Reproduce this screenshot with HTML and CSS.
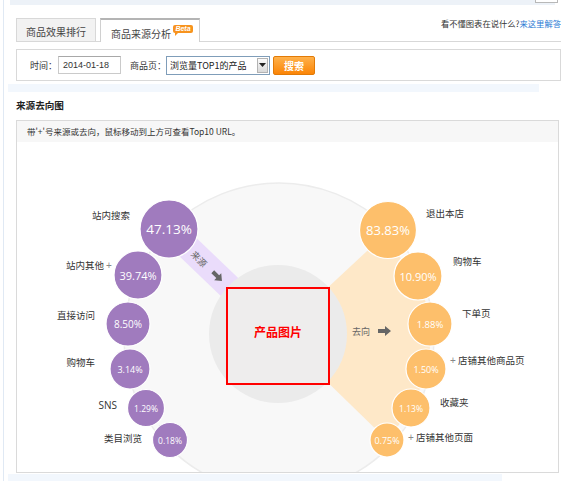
FILE: index.html
```html
<!DOCTYPE html>
<html lang="zh-CN">
<head>
<meta charset="utf-8">
<title>商品来源分析</title>
<link rel="stylesheet" href="styles.css">
</head>
<body>
<div class="frame">
  <div class="topstrip"><span class="topbox"></span></div>
  <div class="tabbar">
    <div class="tab">商品效果排行</div>
    <div class="tab active">商品来源分析<span class="beta">Beta</span></div>
    <div class="help">看不懂图表在说什么?<span class="helplink">来这里解答</span></div>
  </div>
  <div class="filter">
    <span class="lbl">时间：</span>
    <span class="input">2014-01-18</span>
    <span class="lbl lbl2">商品页：</span>
    <span class="select"><span class="seltext">浏览量TOP1的产品</span><span class="selbtn"><svg width="7" height="4" viewBox="0 0 7 4"><path d="M0 0H7L3.5 4Z" fill="#222"/></svg></span></span>
    <span class="btn">搜索</span>
  </div>
  <div class="band"></div>
  <div class="title">来源去向图</div>
  <div class="chart">
    <div class="chart-head">带'+'号来源或去向，鼠标移动到上方可查看Top10 URL。</div>
    <svg class="diagram" viewBox="17 142 541 330" width="541" height="330">
      <circle cx="279" cy="338" r="155" fill="#f8f8f8" stroke="#ececec" stroke-width="1.5"/>
      <line x1="169" y1="229" x2="265" y2="321" stroke="#eadcfb" stroke-width="25"/>
      <polygon points="278,334 381,238 418,276 432,324 428,369 412,408 387,440" fill="#fee8c8"/>
      <circle cx="278" cy="334" r="69" fill="#ebebeb"/>
      <rect x="227" y="288" width="102" height="96" fill="#eeeded" stroke="#ff0000" stroke-width="2"/>
      <text class="prod" x="278" y="331">产品图片</text>

      <text class="dir" x="199" y="259" transform="rotate(45 199 259)">来源</text>
      <path d="M-6 -2H1V-5L7 0L1 5V2H-6Z" fill="#666" transform="translate(217 276) rotate(45)"/>
      <text class="dir" x="361" y="331">去向</text>
      <path d="M-6 -2H1V-5L7 0L1 5V2H-6Z" fill="#666" transform="translate(384 331)"/>

      <g class="pnode">
        <circle cx="169" cy="229" r="29"/>
        <circle cx="138" cy="275" r="24"/>
        <circle cx="128" cy="324" r="22"/>
        <circle cx="130" cy="369" r="20"/>
        <circle cx="146" cy="408" r="18.5"/>
        <circle cx="170" cy="440" r="17.5"/>
      </g>
      <text class="pct" x="169" y="229" font-size="13.5">47.13%</text>
      <text class="pct" x="138" y="275" font-size="11">39.74%</text>
      <text class="pct" x="128" y="324" font-size="10">8.50%</text>
      <text class="pct" x="130" y="369" font-size="9">3.14%</text>
      <text class="pct" x="146" y="408" font-size="8.5">1.29%</text>
      <text class="pct" x="170" y="440" font-size="8.5">0.18%</text>

      <g class="onode">
        <circle cx="388" cy="230" r="28.5"/>
        <circle cx="418" cy="276" r="24"/>
        <circle cx="430" cy="324" r="22"/>
        <circle cx="426" cy="369" r="20"/>
        <circle cx="411" cy="408" r="19"/>
        <circle cx="387" cy="440" r="17"/>
      </g>
      <text class="pct" x="388" y="230" font-size="13">83.83%</text>
      <text class="pct" x="418" y="276" font-size="11">10.90%</text>
      <text class="pct" x="430" y="324" font-size="9.5">1.88%</text>
      <text class="pct" x="426" y="369" font-size="9">1.50%</text>
      <text class="pct" x="411" y="408" font-size="8.5">1.13%</text>
      <text class="pct" x="387" y="440" font-size="9">0.75%</text>

      <text class="lab end" x="130" y="215">站内搜索</text>
      <text class="lab end" x="104" y="265">站内其他</text>
      <text class="plus" x="109" y="265">+</text>
      <text class="lab end" x="95" y="315">直接访问</text>
      <text class="lab end" x="95" y="362">购物车</text>
      <text class="lab end sns" x="117" y="405">SNS</text>
      <text class="lab end" x="142" y="438">类目浏览</text>

      <text class="lab" x="426" y="213">退出本店</text>
      <text class="lab" x="453" y="261">购物车</text>
      <text class="lab" x="462" y="313">下单页</text>
      <text class="plus" x="453" y="360">+</text>
      <text class="lab" x="458" y="360">店铺其他商品页</text>
      <text class="lab" x="440" y="402">收藏夹</text>
      <text class="plus" x="411" y="437">+</text>
      <text class="lab" x="416" y="437">店铺其他页面</text>
    </svg>
  </div>
  <div class="band band-bottom"></div>
</div>
</body>
</html>
```

FILE: styles.css
```css
html, body {
  margin: 0;
  padding: 0;
  background: #ffffff;
}
body {
  font-family: "Noto Sans CJK SC", "Noto Sans", sans-serif;
  color: #333;
  width: 561px;
  height: 481px;
  overflow: hidden;
}
.frame {
  margin-left: 3px;
  border-left: 1px solid #e0e9f4;
  padding-left: 12px;
  width: 545px;
  height: 481px;
  overflow: hidden;
}
.topstrip {
  display: flex;
  margin-left: -6px;
  width: 545px;
  height: 5px;
  background: #edf2f8;
}
.topbox {
  margin-left: auto;
  margin-right: -3px;
  width: 21px;
  height: 2px;
  background: #fff;
  border: 1px solid #b8b8b8;
  border-top: none;
}
.tabbar {
  display: flex;
  align-items: flex-end;
  margin-top: 13px;
  height: 23px;
  border-bottom: 1px solid #d8d8d8;
}
.tab {
  box-sizing: border-box;
  display: flex;
  align-items: center;
  justify-content: center;
  width: 80px;
  height: 23px;
  padding-top: 3px;
  background: #f2f2f2;
  border: 1px solid #d8d8d8;
  border-bottom: none;
  font-size: 10px;
  color: #444;
}
.tab.active {
  justify-content: flex-start;
  width: 100px;
  height: 24px;
  margin-left: 4px;
  margin-bottom: -1px;
  padding-left: 10px;
  padding-top: 4px;
  background: #fff;
  border-color: #d0d0d0;
  border-top: 2px solid #b4b4b4;
}
.beta {
  position: relative;
  align-self: flex-start;
  margin-top: 1px;
  margin-left: 2px;
  width: 20px;
  height: 8px;
  line-height: 8px;
  border-radius: 2px;
  background: #f7931e;
  color: #fff;
  font-family: "Liberation Sans", sans-serif;
  font-weight: bold;
  font-style: italic;
  font-size: 7px;
  text-align: center;
}
.beta::after {
  content: "";
  position: absolute;
  left: 2px;
  bottom: -3px;
  border-left: 3px solid #f7931e;
  border-bottom: 3px solid transparent;
}
.help {
  align-self: flex-start;
  margin-left: auto;
  margin-right: 0;
  white-space: nowrap;
  font-size: 8.3px;
  line-height: 11px;
  color: #333;
}
.helplink {
  color: #2b7bd4;
}
.filter {
  box-sizing: border-box;
  display: flex;
  align-items: center;
  margin-top: 7px;
  height: 32px;
  padding-left: 13px;
  border: 1px solid #d9d9d9;
  font-size: 9px;
}
.lbl {
  color: #333;
  white-space: nowrap;
}
.input {
  box-sizing: border-box;
  display: flex;
  align-items: center;
  margin-left: 1px;
  width: 63px;
  height: 18px;
  padding-left: 4px;
  border: 1px solid #cacaca;
  border-top-color: #a8a8a8;
  font-family: "Liberation Sans", sans-serif;
  font-size: 9px;
  color: #333;
}
.lbl2 {
  margin-left: 9px;
}
.select {
  box-sizing: border-box;
  display: flex;
  align-items: center;
  width: 104px;
  height: 19px;
  border: 1px solid #7f9db9;
  background: #fff;
}
.seltext {
  flex: 1;
  padding-left: 3px;
  font-size: 9px;
  color: #222;
  white-space: nowrap;
}
.selbtn {
  box-sizing: border-box;
  display: flex;
  align-items: center;
  justify-content: center;
  width: 11px;
  height: 15px;
  margin-right: 1px;
  border: 1px solid #b3b3b3;
  background: linear-gradient(#fbfbfb, #d9d9d9);
}
.btn {
  box-sizing: border-box;
  display: flex;
  align-items: center;
  justify-content: center;
  margin-left: 3px;
  width: 42px;
  height: 19px;
  border: 1px solid #e27a06;
  border-radius: 2px;
  background: linear-gradient(#ffb14a, #fb8507);
  color: #fff;
  font-weight: bold;
  font-size: 10px;
}
.band {
  margin-top: 3px;
  margin-left: -8px;
  width: 531px;
  height: 8px;
  background: #f2f7fd;
}
.title {
  margin-top: 7px;
  font-size: 9.6px;
  line-height: 12px;
  font-weight: bold;
  color: #222;
}
.chart {
  box-sizing: border-box;
  margin-top: 9px;
  width: 543px;
  height: 353px;
  border: 1px solid #dadada;
}
.chart-head {
  height: 21px;
  line-height: 21px;
  padding-left: 10px;
  background: #f7f7f7;
  font-size: 8.5px;
  color: #333;
  white-space: nowrap;
}
.diagram {
  display: block;
}
.band-bottom {
  margin-top: 1px;
  width: 494px;
  height: 7px;
}
.pnode circle {
  fill: #a07bbe;
  stroke: #ffffff;
  stroke-width: 1.2;
}
.onode circle {
  fill: #fdbf6b;
  stroke: #ffffff;
  stroke-width: 1.2;
}
.pct {
  fill: #ffffff;
  font-family: "Open Sans", "Noto Sans", sans-serif;
  text-anchor: middle;
  dominant-baseline: central;
}
.prod {
  fill: #ff0000;
  font-size: 12px;
  font-weight: bold;
  text-anchor: middle;
  dominant-baseline: central;
}
.dir {
  fill: #666;
  font-size: 9px;
  text-anchor: middle;
  dominant-baseline: central;
}
.lab {
  fill: #333;
  font-size: 9.5px;
  dominant-baseline: central;
}
.lab.end {
  text-anchor: end;
}
.lab.sns {
  font-family: "Open Sans", "Noto Sans", sans-serif;
  font-size: 10px;
}
.plus {
  fill: #888;
  font-family: "Liberation Sans", sans-serif;
  font-size: 10px;
  text-anchor: middle;
  dominant-baseline: central;
}
```
